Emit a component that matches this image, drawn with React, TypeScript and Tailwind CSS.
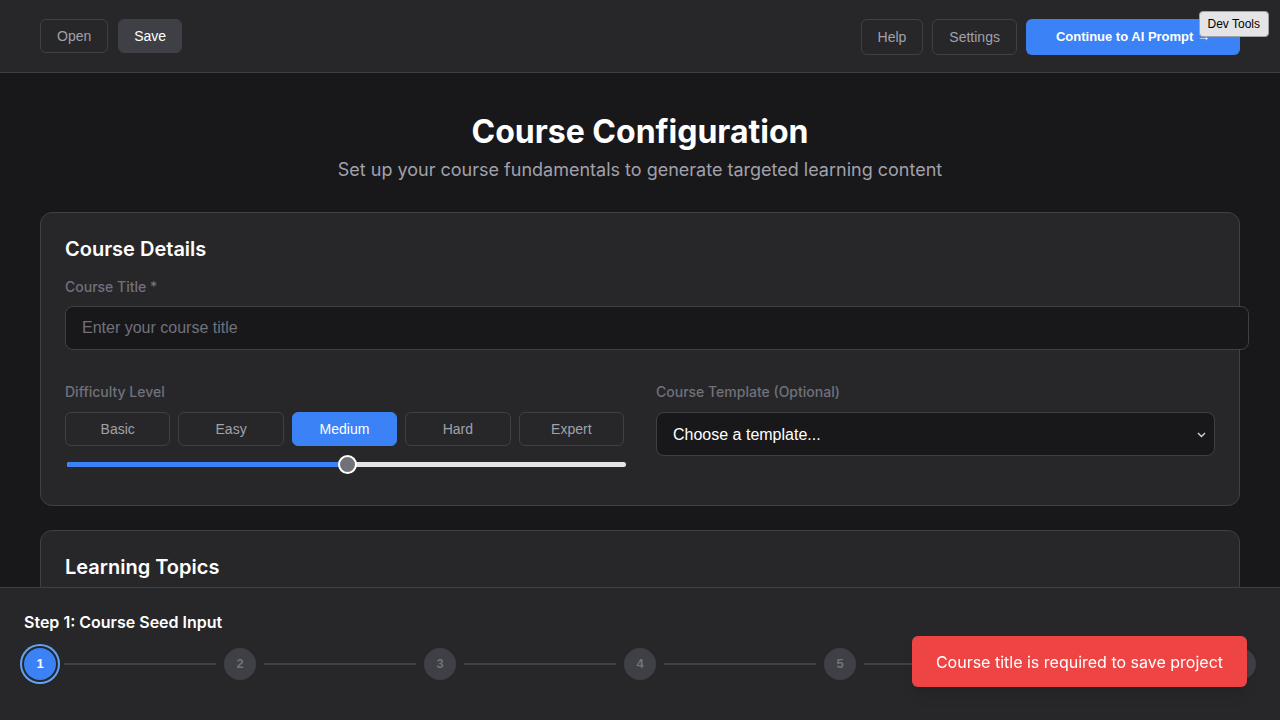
import React, { useState } from 'react';

const levels = ['Basic', 'Easy', 'Medium', 'Hard', 'Expert'];
const steps = [1, 2, 3, 4, 5, 6, 7];

const App: React.FC = () => {
  const [level, setLevel] = useState(2);

  return (
    <div className="min-h-screen bg-[#18181b] text-white font-['Inter',sans-serif]">
      {/* top bar */}
      <header className="h-[73px] bg-[#27272a] border-b border-[#3f3f46] px-10 pt-[19px] flex items-start justify-between font-['Liberation_Sans',Arial,sans-serif]">
        <div className="flex gap-2.5">
          <button className="px-4 py-1.5 text-sm leading-5 text-[#a1a1aa] border border-[#3f3f46] rounded-md">Open</button>
          <button className="px-[15px] py-1.5 text-sm leading-5 text-white bg-[#3f3f46] border border-[#3f3f46] rounded-md">Save</button>
        </div>
        <div className="flex gap-[9px]">
          <button className="px-4 py-1.5 text-sm leading-5 text-[#a1a1aa] border border-[#3f3f46] rounded-md">Help</button>
          <button className="px-4 py-1.5 text-sm leading-5 text-[#a1a1aa] border border-[#3f3f46] rounded-md">Settings</button>
          <button className="px-[30px] py-2 text-[13px] leading-5 font-bold text-white bg-[#3b82f6] rounded-md">Continue to AI Prompt →</button>
        </div>
      </header>

      <main className="px-10 pt-[39px] pb-40">
        <div className="text-center">
          <h1 className="text-[32px] leading-10 font-bold">Course Configuration</h1>
          <p className="mt-1 text-lg leading-7 text-[#a1a1aa]">Set up your course fundamentals to generate targeted learning content</p>
        </div>

        <section className="mt-7 bg-[#27272a] border border-[#3f3f46] rounded-xl px-6 pt-[22px] pb-[26px]">
          <h2 className="text-xl leading-7 font-semibold">Course Details</h2>
          <label className="block mt-[14px] text-sm leading-5 font-medium text-[#71717a]">Course Title *</label>
          <input
            type="text"
            placeholder="Enter your course title"
            className="box-content w-full mt-[9px] px-4 h-[42px] bg-[#18181b] border border-[#3f3f46] rounded-lg text-base text-white placeholder-[#71717a] outline-none font-['Liberation_Sans',Arial,sans-serif]"
          />

          <div className="mt-8 grid grid-cols-2 gap-8">
            <div>
              <label className="block text-sm leading-5 font-medium text-[#71717a]">Difficulty Level</label>
              <div className="mt-2.5 grid grid-cols-5 gap-2 font-['Liberation_Sans',Arial,sans-serif]">
                {levels.map((l, i) => (
                  <button
                    key={l}
                    onClick={() => setLevel(i)}
                    className={
                      i === level
                        ? 'h-[34px] text-sm text-white bg-[#3b82f6] border border-[#3b82f6] rounded-md'
                        : 'h-[34px] text-sm text-[#a1a1aa] border border-[#3f3f46] rounded-md'
                    }
                  >
                    {l}
                  </button>
                ))}
              </div>
              <div className="relative mt-[9px] h-6 ml-0.5 -mr-0.5">
                <div className="absolute left-0 right-0 top-[7px] h-[5px] rounded-full bg-[#e4e4e7]" />
                <div className="absolute left-0 top-[7px] h-[5px] rounded-full bg-[#3b82f6]" style={{ width: `${(level / 4) * 100}%` }} />
                <div
                  className="absolute top-0 w-[19px] h-[19px] -ml-[9px] rounded-full bg-[#71717a] border-2 border-white"
                  style={{ left: `${(level / 4) * 100}%` }}
                />
              </div>
            </div>
            <div>
              <label className="block text-sm leading-5 font-medium text-[#71717a]">Course Template (Optional)</label>
              <div className="relative mt-2.5">
                <select className="appearance-none w-full h-11 pl-4 pr-10 pt-0.5 bg-[#18181b] border border-[#3f3f46] rounded-lg text-base text-white outline-none font-['Liberation_Sans',Arial,sans-serif]">
                  <option>Choose a template...</option>
                </select>
                <svg className="absolute right-[9px] top-[20px] w-[9px] h-[6px] pointer-events-none" viewBox="0 0 9 6" fill="none" stroke="#d4d4d8" strokeWidth="1.4">
                  <path d="M1 1l3.5 3.5L8 1" />
                </svg>
              </div>
            </div>
          </div>
        </section>

        <section className="mt-6 bg-[#27272a] border border-[#3f3f46] rounded-xl px-6 pt-[22px] pb-6 h-[300px]">
          <h2 className="text-xl leading-7 font-semibold">Learning Topics</h2>
        </section>
      </main>

      {/* step footer */}
      <footer className="fixed left-0 right-0 bottom-0 h-[133px] bg-[#27272a] border-t border-[#3f3f46] px-6 pt-[22px]">
        <h3 className="text-base leading-6 font-semibold">Step 1: Course Seed Input</h3>
        <div className="mt-3.5 flex items-center font-['Liberation_Sans',Arial,sans-serif]">
          {steps.map((s, i) => (
            <React.Fragment key={s}>
              {s === 1 ? (
                <div className="w-8 h-8 shrink-0 rounded-full bg-[#3b82f6] ring-2 ring-[#60a5fa] ring-offset-2 ring-offset-[#27272a] flex items-center justify-center text-[13px] font-bold text-white">
                  {s}
                </div>
              ) : (
                <div className="w-8 h-8 shrink-0 rounded-full bg-[#3f3f46] flex items-center justify-center text-[13px] font-bold text-[#71717a]">
                  {s}
                </div>
              )}
              {i < steps.length - 1 && <div className="flex-1 mx-2 h-0.5 bg-[#3f3f46]" />}
            </React.Fragment>
          ))}
        </div>
      </footer>

      {/* toast */}
      <div className="fixed right-[33px] bottom-[33px] bg-[#ef4444] text-white text-base leading-6 px-6 py-[13.5px] rounded-md shadow-lg">
        Course title is required to save project
      </div>

      <button className="fixed top-[11px] right-[11px] px-2 py-1 text-xs leading-4 text-black bg-[#e4e4e7] border border-[#a1a1aa] rounded font-['Liberation_Sans',Arial,sans-serif]">
        Dev Tools
      </button>
    </div>
  );
};

export default App;
